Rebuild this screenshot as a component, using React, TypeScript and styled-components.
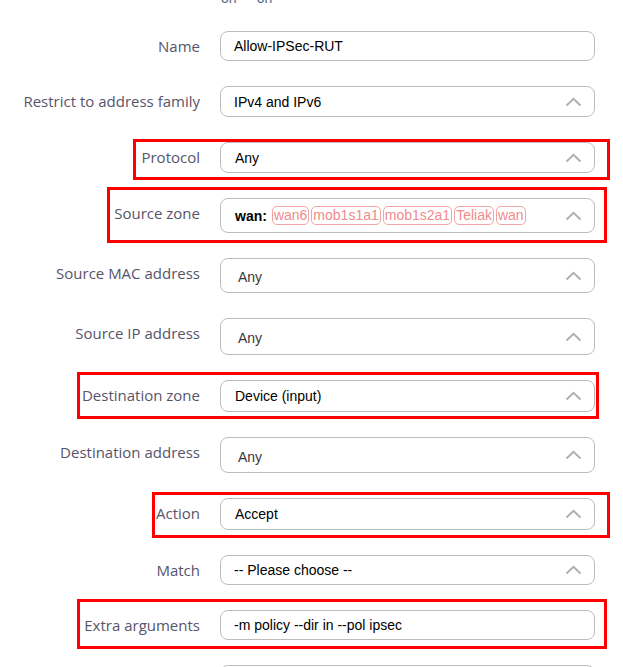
import React from 'react';
import styled, { createGlobalStyle } from 'styled-components';

const GlobalStyle = createGlobalStyle`
  html, body {
    margin: 0;
    background: #ffffff;
  }
  body {
    font-family: "Liberation Sans", Arial, sans-serif;
  }
`;

/* PAGE */
const Page = styled.div`
  width: 623px;
  height: 667px;
  overflow: hidden;
  display: flex;
  flex-direction: column;
  gap: 25px;
`;

const TopNote = styled.div`
  margin: -10px 0 0 221px;
  height: 16px;
  line-height: 16px;
  font-size: 14px;
  color: #5b6a80;
`;

/* ROWS */
const Row = styled.div`
  position: relative;
  display: grid;
  grid-template-columns: 200px 375px;
  column-gap: 20px;
  align-items: start;
  flex-shrink: 0;
`;

const Label = styled.label`
  text-align: right;
  font-family: "Open Sans", "Noto Sans", sans-serif;
  font-size: 15px;
  line-height: 30px;
  color: #57546a;
  white-space: nowrap;
`;

const Control = styled.div<{ $h: number; $pad: number; $drop?: boolean }>`
  box-sizing: border-box;
  height: ${(p) => p.$h}px;
  display: flex;
  align-items: center;
  padding-left: ${(p) => p.$pad}px;
  padding-right: 12px;
  border: 1px solid #bdbdbd;
  border-radius: 8px;
  background: #fff;
`;

const Value = styled.span<{ $muted?: boolean; $shift?: number }>`
  font-size: 14px;
  line-height: 16px;
  color: ${(p) => (p.$muted ? '#383838' : '#000000')};
  margin-top: ${(p) => p.$shift ?? 0}px;
  white-space: nowrap;
`;

const ZoneName = styled.b`
  font-size: 14px;
  color: #000;
  margin-right: 5px;
`;

const Chips = styled.div`
  display: flex;
  gap: 2px;
`;

const Chip = styled.span`
  font-size: 14px;
  line-height: 17px;
  padding: 0 1px;
  color: #f08c8c;
  border: 1px solid #f3a4a4;
  border-radius: 5px;
`;

const Chevron = styled.svg`
  margin-left: auto;
  flex-shrink: 0;
`;

/* ANNOTATION */
const Highlight = styled.div<{ $left: number; $top: number; $w: number; $h: number }>`
  position: absolute;
  left: ${(p) => p.$left}px;
  top: ${(p) => p.$top}px;
  width: ${(p) => p.$w}px;
  height: ${(p) => p.$h}px;
  box-sizing: border-box;
  border: 3px solid #ff0000;
  pointer-events: none;
`;

type Box = { left: number; top: number; w: number; h: number };

type Field = {
  label: string;
  h: number;
  pad: number;
  value?: string;
  muted?: boolean;
  shift?: number;
  drop?: boolean;
  zone?: boolean;
  mark?: Box;
};

const fields: Field[] = [
  { label: 'Name', h: 30, pad: 13, value: 'Allow-IPSec-RUT' },
  { label: 'Restrict to address family', h: 31, pad: 13, value: 'IPv4 and IPv6', drop: true },
  {
    label: 'Protocol', h: 31, pad: 14, value: 'Any', drop: true,
    mark: { left: 133, top: -3, w: 477, h: 41 },
  },
  {
    label: 'Source zone', h: 35, pad: 14, drop: true, zone: true,
    mark: { left: 107, top: -11, w: 500, h: 56 },
  },
  { label: 'Source MAC address', h: 35, pad: 17, value: 'Any', muted: true, shift: 3, drop: true },
  { label: 'Source IP address', h: 37, pad: 17, value: 'Any', muted: true, shift: 3, drop: true },
  {
    label: 'Destination zone', h: 32, pad: 14, value: 'Device (input)', drop: true,
    mark: { left: 77, top: -8, w: 522, h: 47 },
  },
  { label: 'Destination address', h: 36, pad: 17, value: 'Any', muted: true, shift: 3, drop: true },
  {
    label: 'Action', h: 32, pad: 14, value: 'Accept', drop: true,
    mark: { left: 152, top: -6, w: 458, h: 46 },
  },
  { label: 'Match', h: 30, pad: 13, value: '-- Please choose --', drop: true },
  {
    label: 'Extra arguments', h: 30, pad: 13, value: '-m policy --dir in --pol ipsec',
    mark: { left: 77, top: -11, w: 530, h: 50 },
  },
  { label: '', h: 30, pad: 13, value: '' },
];

const zones = ['wan6', 'mob1s1a1', 'mob1s2a1', 'Teliak', 'wan'];

const UpArrow: React.FC = () => (
  <Chevron width="17" height="10" viewBox="0 0 17 10">
    <polyline points="1.5,8.5 8.5,1.8 15.5,8.5" fill="none" stroke="#b0b0b0" strokeWidth="2" />
  </Chevron>
);

const App: React.FC = () => {
  return (
    <>
      <GlobalStyle />
      <Page>
        <TopNote>on&nbsp;&nbsp;-&nbsp;&nbsp;on</TopNote>
        {fields.map((f, i) => (
          <Row key={i}>
            <Label>{f.label}</Label>
            <Control $h={f.h} $pad={f.pad}>
              {f.zone ? (
                <>
                  <ZoneName>wan:</ZoneName>
                  <Chips>
                    {zones.map((z) => (
                      <Chip key={z}>{z}</Chip>
                    ))}
                  </Chips>
                </>
              ) : (
                <Value $muted={f.muted} $shift={f.shift}>
                  {f.value}
                </Value>
              )}
              {f.drop && <UpArrow />}
            </Control>
            {f.mark && (
              <Highlight $left={f.mark.left} $top={f.mark.top} $w={f.mark.w} $h={f.mark.h} />
            )}
          </Row>
        ))}
      </Page>
    </>
  );
};

export default App;
